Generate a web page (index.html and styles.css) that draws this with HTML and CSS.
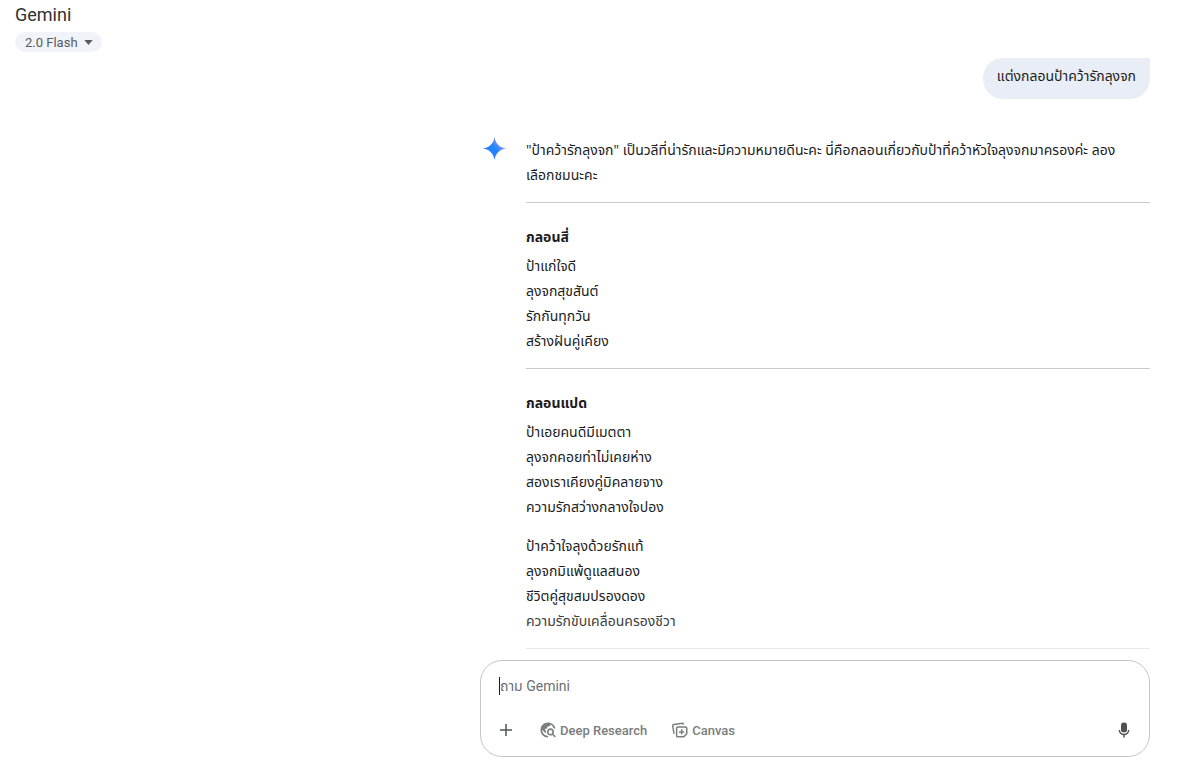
FILE: index.html
```html
<!DOCTYPE html>
<html lang="th">
<head>
<meta charset="utf-8">
<meta name="viewport" content="width=device-width, initial-scale=1">
<title>Gemini</title>
<link rel="stylesheet" href="styles.css">
</head>
<body>
<header class="topbar">
  <h1 class="brand">Gemini</h1>
  <button class="model" type="button">2.0 Flash
    <svg class="caret" viewBox="0 0 10 6" aria-hidden="true"><path d="M0 0h10L5 6z"/></svg>
  </button>
</header>
<main class="chat">
  <p class="prompt">แต่งกลอนป้าคว้ารักลุงจก</p>
  <section class="reply">
    <svg class="spark" viewBox="0 0 24 24" aria-hidden="true">
      <defs><linearGradient id="spark" x1="0.2" y1="0.75" x2="0.8" y2="0.2"><stop offset="0" stop-color="#2a7fff"/><stop offset=".5" stop-color="#1d86ff"/><stop offset="1" stop-color="#a493ef"/></linearGradient></defs>
      <path fill="url(#spark)" d="M12 0C13 6.8 17.2 11 24 12C17.2 13 13 17.2 12 24C11 17.2 6.8 13 0 12C6.8 11 11 6.8 12 0z"/>
    </svg>
    <div class="answer">
      <p class="lines">"ป้าคว้ารักลุงจก" เป็นวลีที่น่ารักและมีความหมายดีนะคะ นี่คือกลอนเกี่ยวกับป้าที่คว้าหัวใจลุงจกมาครองค่ะ ลอง<br>เลือกชมนะคะ</p>
      <hr class="rule">
      <h2 class="title">กลอนสี่</h2>
      <p class="lines">ป้าแก่ใจดี<br>ลุงจกสุขสันต์<br>รักกันทุกวัน<br>สร้างฝันคู่เคียง</p>
      <hr class="rule">
      <h2 class="title">กลอนแปด</h2>
      <p class="lines">ป้าเอยคนดีมีเมตตา<br>ลุงจกคอยท่าไม่เคยห่าง<br>สองเราเคียงคู่มิคลายจาง<br>ความรักสว่างกลางใจปอง</p>
      <p class="lines">ป้าคว้าใจลุงด้วยรักแท้<br>ลุงจกมิแพ้ดูแลสนอง<br>ชีวิตคู่สุขสมปรองดอง<br><span class="fading">ความรักขับเคลื่อนครองชีวา</span></p>
      <hr class="rule faint">
    </div>
  </section>
  <form class="composer">
    <input class="ask" type="text" placeholder="ถาม Gemini" aria-label="ถาม Gemini">
    <div class="tools">
      <button class="tool plus" type="button" aria-label="เพิ่ม">
        <svg class="icon" viewBox="0 0 18 18"><path d="M9 3v12M3 9h12" fill="none" stroke="currentColor" stroke-width="1.5"/></svg>
      </button>
      <button class="tool" type="button">
        <svg class="icon" viewBox="0 0 24 24"><path fill="currentColor" d="M19.3 17.300c.5-.8.8-1.700.8-2.700 0-2.700-2.100-4.800-4.800-4.800s-4.800 2.100-4.800 4.800 2.100 4.800 4.800 4.800c.9 0 1.700-.2 2.500-.7l3.200 3.200 1.500-1.500zM15.300 17.200a2.600 2.600 0 1 1 0-5.200 2.600 2.600 0 0 1 0 5.200z"/><path fill="currentColor" d="M12 19.800V22C6.400 22 2 17.600 2 12S6.400 2 12 2c4.900 0 9 3.400 9.900 8h-2.300c-.6-2.300-2.200-4.200-4.300-5.200 0 1.400-.9 2.400-2.300 2.400h-2v2c0 .6-.5 1-1 1H8v2.200h1.200V16H8.500l-4.200-4.200C4.200 16.400 7.600 19.800 12 19.800z"/></svg>
        Deep Research
      </button>
      <button class="tool" type="button">
        <svg class="icon" viewBox="0 0 24 24"><g fill="none" stroke="currentColor" stroke-width="2"><path d="M9 8h10.500A1.500 1.500 0 0 1 21 9.500V17l-4 4H9a1.500 1.500 0 0 1-1.500-1.500v-10A1.500 1.500 0 0 1 9 8z"/><path d="M14.200 11v7M10.700 14.500h7M4 17L2.300 6.300a1.500 1.500 0 0 1 1.200-1.700L15.500 3 17 4.500"/></g></svg>
        Canvas
      </button>
      <button class="tool mic" type="button" aria-label="ไมโครโฟน">
        <svg class="icon" viewBox="0 0 24 24"><rect x="8" y="2" width="8" height="13" rx="3.500" fill="currentColor"/><path d="M5.800 12c0 3.400 2.800 6 6.200 6s6.200-2.600 6.200-6M12 18v4" fill="none" stroke="currentColor" stroke-width="2"/></svg>
      </button>
    </div>
  </form>
</main>
</body>
</html>
```

FILE: styles.css
```css
* { box-sizing: border-box; }
body { margin: 0; background: #fff; color: #1b1c1d; font-family: "Open Sans", "Noto Sans", "Noto Sans Thai", sans-serif; }
button, input { font: inherit; color: inherit; border: 0; padding: 0; background: none; }
h1, h2, p { margin: 0; }
.topbar { display: flex; flex-direction: column; align-items: flex-start; padding: 4px 15px 0; }
.topbar, .composer { font-family: Roboto, "Noto Sans Thai", sans-serif; }
.brand { font-size: 18px; line-height: 22px; font-weight: 400; color: #303132; }
.model { display: flex; align-items: center; gap: 6px; height: 20px; margin-top: 6px; padding: 0 9px 0 10px; border-radius: 10px; background: #f0f4f9; font-size: 13px; color: #575b5f; }
.caret { width: 9px; height: 5px; fill: #575b5f; }
.chat { margin: 6px 50px 0 40%; }
.prompt { width: fit-content; margin-left: auto; padding: 6px 14px 11px; border-radius: 20px 0 20px 20px; background: #e9eef6; font-size: 14px; line-height: 24px; }
.reply { display: flex; gap: 20px; padding: 38px 0 0 3px; }
.spark { width: 23px; height: 23px; flex: none; }
.answer { flex: 1; font-size: 14px; }
.lines { line-height: 25px; margin-bottom: 14px; }
.rule { border: 0; border-top: 1px solid #c9cbca; margin: 15px 0 22px; }
.faint { border-color: #e8eaea; margin-bottom: 0; }
.fading { color: #3c3d3e; }
.title { font-size: 14px; line-height: 24px; margin-bottom: 4px; }
.composer { display: flex; flex-direction: column; gap: 23px; margin-top: 11px; border: 1px solid #c4c7c5; border-radius: 22px; padding: 16px 18px 14px; }
.ask { width: 100%; height: 18px; border-left: 1px solid #1b1c1d; font-size: 14px; outline: none; }
.ask::placeholder { color: #6c6f70; opacity: 1; }
.tools { display: flex; gap: 24px; height: 24px; }
.tool { display: flex; align-items: center; gap: 3px; font-size: 13px; font-weight: 500; color: #7a7d7c; }
.plus, .mic { color: #505356; }
.plus { margin-left: -2px; }
.icon { width: 18px; height: 18px; }
.mic { margin-left: auto; margin-right: -2px; }
```
